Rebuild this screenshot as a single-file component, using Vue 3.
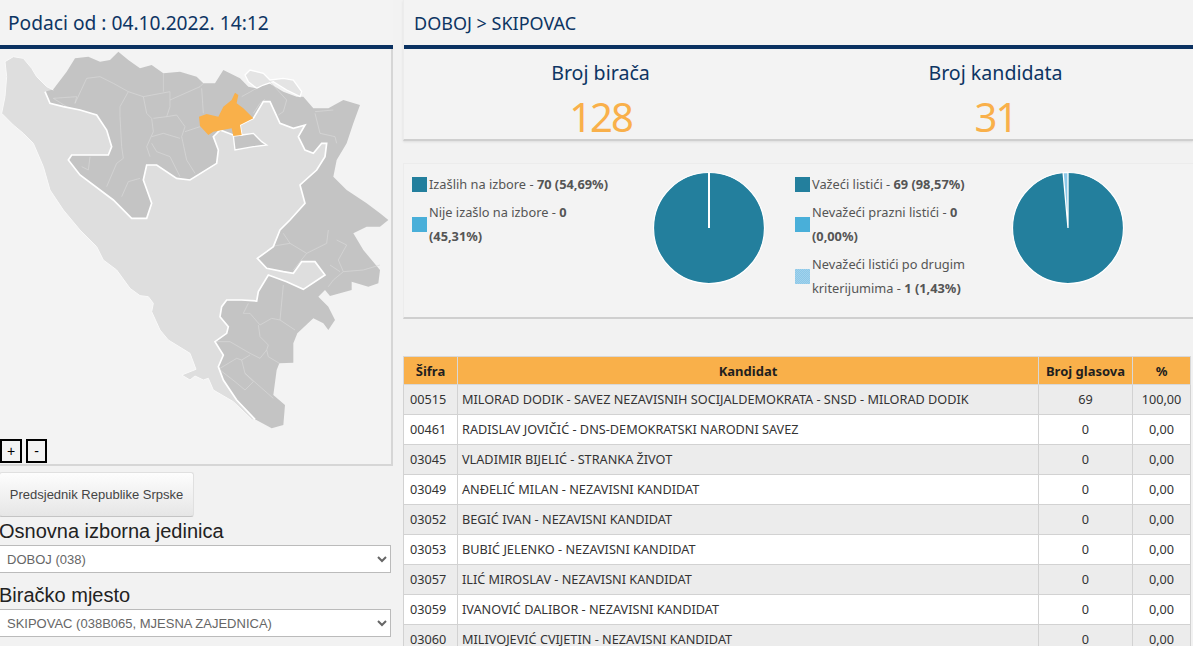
<script setup>
// map outlines, traced at 3x page coordinates
const inner = [[135,275],[150,310],[190,320],[240,330],[290,345],[320,390],[335,440],[325,465],[215,465],[205,480],[240,525],[340,600],[395,655],[440,655],[455,610],[430,540],[440,495],[470,495],[530,535],[570,540],[650,490],[655,450],[640,410],[660,390],[700,405],[725,405],[720,375],[760,355],[790,305],[810,305],[840,370],[880,385],[915,375],[895,410],[915,450],[940,460],[965,430],[980,430],[975,470],[950,510],[900,555],[915,610],[870,660],[840,690],[820,740],[800,755],[772,775],[800,805],[850,815],[880,820],[905,785],[945,785],[975,825],[910,868],[860,845],[805,825],[775,875],[770,903],[725,900],[680,900],[665,920],[660,950],[685,980],[680,1000],[645,1025],[670,1065],[655,1100],[670,1140],[710,1200],[765,1258]]
const outer = [[815,1285],[850,1275],[855,1215],[820,1185],[830,1110],[838,1090],[880,1088],[880,1030],[892,1000],[940,955],[970,970],[985,990],[1005,960],[985,920],[955,890],[975,870],[990,888],[1055,870],[1055,845],[1105,860],[1135,850],[1140,810],[1090,750],[1060,700],[1100,680],[1140,680],[1165,660],[1140,640],[1100,610],[1040,570],[1000,530],[1010,480],[1040,430],[1060,370],[1080,315],[1030,300],[985,325],[940,325],[910,290],[890,290],[850,275],[800,245],[770,265],[745,260],[720,235],[670,210],[645,250],[610,250],[590,230],[540,215],[490,220],[455,195],[420,205],[385,180],[355,155],[330,180],[300,185],[265,170],[225,175],[200,215],[160,268]]
const left = [[160,270],[140,260],[110,230],[95,205],[70,175],[40,170],[15,185],[20,230],[15,290],[5,340],[40,375],[70,400],[100,430],[130,500],[150,570],[190,630],[240,690],[290,740],[310,780],[350,810],[390,865],[420,887],[445,890],[460,910],[455,935],[480,990],[505,1020],[570,1060],[588,1108],[545,1125],[570,1140],[585,1128],[610,1140],[625,1135],[640,1170],[700,1205],[755,1258]]
const blob = [[700,408],[725,405],[760,400],[785,425],[800,435],[760,440],[705,450]]
const brcko = [[735,225],[750,210],[790,220],[810,240],[850,235],[880,240],[905,275],[900,290],[860,270],[820,245],[790,255],[770,265],[745,245]]
const doboj = [[705,278],[715,285],[710,310],[730,325],[760,355],[720,375],[725,405],[700,408],[695,385],[640,395],[625,405],[600,378],[597,350],[620,342],[655,350],[670,320],[695,300]]
const districts = [
  [[225,310],[260,235],[300,230],[340,250],[385,275]],
  [[385,275],[360,320],[360,350],[365,440],[370,475],[350,490],[320,560]],
  [[385,275],[430,290],[440,340],[455,355],[460,395],[440,440],[450,470]],
  [[430,290],[510,275],[510,320],[500,350],[460,355]],
  [[500,350],[530,345],[555,380],[545,410],[560,480],[585,520]],
  [[455,410],[490,400],[540,415]],
  [[455,430],[470,455],[510,470],[540,530]],
  [[490,275],[490,220]],
  [[510,300],[600,260],[610,250]],
  [[605,265],[610,340]],
  [[555,395],[600,380]],
  [[725,290],[770,265]],
  [[760,340],[780,310],[795,298]],
  [[810,245],[860,300],[850,335],[835,345]],
  [[945,340],[960,400],[1005,410],[1010,430]],
  [[945,335],[1000,330]],
  [[270,470],[265,510],[245,500]],
  [[420,535],[385,545],[365,590]],
  [[200,320],[160,295],[230,290],[225,310]],
  [[850,855],[840,960],[885,990]],
  [[840,960],[815,955],[780,975],[750,940],[730,940],[745,910]],
  [[775,975],[780,1010],[805,1035],[800,1050],[780,1075],[750,1060],[690,1025],[650,1025]],
  [[800,1050],[805,1070],[838,1090]],
  [[750,1065],[725,1080],[710,1075],[660,1105]],
  [[725,1080],[735,1120],[780,1160],[820,1195]],
  [[735,1120],[760,1145],[735,1170],[705,1145],[660,1110]],
  [[810,740],[870,730],[920,760],[880,810]],
  [[920,760],[980,730],[985,690]],
  [[1010,720],[1040,735],[1015,780],[1030,815],[1000,840],[985,860]],
  [[1030,815],[1090,810],[1140,795]],
  [[990,795],[1020,815]],
  [[870,730],[850,700]],
]
const pts = (list) => list.map((p) => p.join(',')).join(' ')
const federation = pts([...left, ...[...inner].reverse()])
const entity = pts([...inner, ...outer])
const border = pts(inner)

const stats = [
  { label: 'Broj birača', value: 128 },
  { label: 'Broj kandidata', value: 31 },
]

const rows = [
  ['00515', 'MILORAD DODIK - SAVEZ NEZAVISNIH SOCIJALDEMOKRATA - SNSD - MILORAD DODIK', '69', '100,00'],
  ['00461', 'RADISLAV JOVIČIĆ - DNS-DEMOKRATSKI NARODNI SAVEZ', '0', '0,00'],
  ['03045', 'VLADIMIR BIJELIĆ - STRANKA ŽIVOT', '0', '0,00'],
  ['03049', 'ANĐELIĆ MILAN - NEZAVISNI KANDIDAT', '0', '0,00'],
  ['03052', 'BEGIĆ IVAN - NEZAVISNI KANDIDAT', '0', '0,00'],
  ['03053', 'BUBIĆ JELENKO - NEZAVISNI KANDIDAT', '0', '0,00'],
  ['03057', 'ILIĆ MIROSLAV - NEZAVISNI KANDIDAT', '0', '0,00'],
  ['03059', 'IVANOVIĆ DALIBOR - NEZAVISNI KANDIDAT', '0', '0,00'],
  ['03060', 'MILIVOJEVIĆ CVIJETIN - NEZAVISNI KANDIDAT', '0', '0,00'],
]
</script>

<template>
  <div class="page">
    <aside class="side">
      <div class="head">Podaci od : 04.10.2022. 14:12</div>
      <div class="map">
        <svg class="map-svg" viewBox="0 147 1173 1245" width="391" height="415">
          <polygon :points="federation" fill="#dedede" />
          <polygon :points="entity" fill="#c4c4c4" />
          <polygon :points="pts(blob)" fill="#c4c4c4" stroke="#fff" stroke-width="4" />
          <polygon :points="pts(brcko)" fill="#e4e4e4" stroke="#fff" stroke-width="4" />
          <polyline v-for="(d, i) in districts" :key="i" :points="pts(d)" fill="none" stroke="#d9d9d9" stroke-width="2" />
          <polyline :points="border" fill="none" stroke="#fff" stroke-width="5" />
          <polyline :points="pts(left)" fill="none" stroke="#f9f9f9" stroke-width="3" />
          <polygon :points="pts(doboj)" fill="#f9b04a" />
        </svg>
        <div class="zoom">
          <button class="zoom-btn plus">+</button>
          <button class="zoom-btn minus">-</button>
        </div>
      </div>
      <button class="election">Predsjednik Republike Srpske</button>
      <label class="field-label first">Osnovna izborna jedinica</label>
      <select class="picker">
        <option>DOBOJ (038)</option>
      </select>
      <label class="field-label">Biračko mjesto</label>
      <select class="picker">
        <option>SKIPOVAC (038B065, MJESNA ZAJEDNICA)</option>
      </select>
    </aside>

    <main class="content">
      <div class="panel top">
        <div class="head crumb">DOBOJ &gt; SKIPOVAC</div>
        <div class="stats">
          <div v-for="s in stats" :key="s.label" class="stat">
            <div class="stat-label">{{ s.label }}</div>
            <div class="stat-value">{{ s.value }}</div>
          </div>
        </div>
      </div>

      <div class="panel charts">
        <div class="chart">
          <div class="legend">
            <div class="legend-row">
              <span class="swatch dark"></span>
              <span>Izašlih na izbore - <b>70 (54,69%)</b></span>
            </div>
            <div class="legend-row">
              <span class="swatch mid"></span>
              <span>Nije izašlo na izbore - <b>0</b><br><b>(45,31%)</b></span>
            </div>
          </div>
          <svg class="pie" width="114" height="114" viewBox="-57 -57 114 114">
            <circle r="55.5" fill="#237f9d" stroke="#fff" stroke-width="1.2" />
            <line x1="0" y1="0" x2="0" y2="-56" stroke="#fff" stroke-width="2" />
          </svg>
        </div>
        <div class="chart second">
          <div class="legend">
            <div class="legend-row">
              <span class="swatch dark"></span>
              <span>Važeći listići - <b>69 (98,57%)</b></span>
            </div>
            <div class="legend-row">
              <span class="swatch mid"></span>
              <span>Nevažeći prazni listići - <b>0</b><br><b>(0,00%)</b></span>
            </div>
            <div class="legend-row">
              <span class="swatch pale"></span>
              <span>Nevažeći listići po drugim<br>kriterijumima - <b>1 (1,43%)</b></span>
            </div>
          </div>
          <svg class="pie" width="114" height="114" viewBox="-57 -57 114 114">
            <circle r="55.5" fill="#237f9d" stroke="#fff" stroke-width="1.2" />
            <path d="M0 0 L-4.9 -55.3 A55.5 55.5 0 0 1 0 -55.5 Z" fill="#8cc8e8" stroke="#fff" stroke-width="1.3" />
          </svg>
        </div>
      </div>

      <table class="results">
        <thead>
          <tr>
            <th class="c-code">Šifra</th>
            <th>Kandidat</th>
            <th class="c-votes">Broj glasova</th>
            <th class="c-pct">%</th>
          </tr>
        </thead>
        <tbody>
          <tr v-for="r in rows" :key="r[0]">
            <td>{{ r[0] }}</td>
            <td>{{ r[1] }}</td>
            <td class="num">{{ r[2] }}</td>
            <td class="num">{{ r[3] }}</td>
          </tr>
        </tbody>
      </table>
    </main>
  </div>
</template>

<style scoped>
.page {
  display: flex;
  height: 646px;
  overflow: hidden;
  background: #f2f2f2;
  font-family: "Noto Sans", "DejaVu Sans", sans-serif;
}
.side {
  width: 393px;
  flex: none;
}
.head {
  box-sizing: border-box;
  height: 49px;
  padding: 11px 0 0 8px;
  font-size: 19.2px;
  line-height: 24px;
  color: #0d3563;
  border-bottom: 4px solid #0a3161;
  background: #f3f3f3;
}
.crumb {
  font-size: 18px;
  padding-left: 10px;
}
.map {
  position: relative;
  height: 417px;
  box-sizing: border-box;
  background: #f3f3f3;
  border-right: 2px solid #d6d6d6;
  border-bottom: 2px solid #d6d6d6;
}
.map-svg {
  display: block;
}
.zoom {
  position: absolute;
  left: 0;
  bottom: 1px;
  display: flex;
  gap: 4px;
}
.zoom-btn {
  height: 24px;
  padding: 0;
  box-sizing: border-box;
  border: 2px solid #000;
  background: #f3f3f3;
  color: #000;
  font-family: "Liberation Sans", sans-serif;
  font-size: 14px;
  line-height: 18px;
}
.plus { width: 22px; }
.minus { width: 21px; }
.election {
  display: block;
  box-sizing: border-box;
  width: 195px;
  height: 45px;
  margin: 6px 0 0 -1px;
  padding: 0;
  border: 1px solid #e0e0e0;
  border-bottom-color: #c4c4c4;
  border-radius: 3px;
  background: linear-gradient(#fdfdfd, #e6e6e6);
  color: #444;
  font-family: "Liberation Sans", sans-serif;
  font-size: 13px;
}
.field-label {
  display: block;
  margin: 10px 0 0 -1px;
  font-family: "Liberation Sans", sans-serif;
  font-size: 20px;
  line-height: 25px;
  color: #222;
}
.field-label.first {
  margin-top: 2px;
}
.picker {
  display: block;
  width: 392px;
  height: 28px;
  margin: 1px 0 0 -1px;
  padding: 0 0 0 3px;
  border: 1px solid #bbb;
  border-radius: 0;
  background: #fff;
  color: #666;
  font-family: "Liberation Sans", sans-serif;
  font-size: 13px;
}
.content {
  flex: 1;
  min-width: 0;
  margin-left: 10px;
}
.panel {
  background: #f3f3f3;
  border-left: 1px solid #ececec;
  border-bottom: 2px solid #cfcfcf;
}
.top {
  height: 141px;
  box-sizing: border-box;
  box-shadow: 0 1px 2px #ddd;
}
.stats {
  display: flex;
  margin-left: -1px;
}
.stat {
  flex: 1;
  text-align: center;
}
.stat-label {
  margin-top: 9px;
  font-size: 19.6px;
  line-height: 30px;
  color: #0d3563;
}
.stat-value {
  margin-top: 6px;
  font-size: 40px;
  letter-spacing: -2px;
  line-height: 46px;
  color: #f9b04a;
}
.charts {
  display: flex;
  height: 156px;
  box-sizing: border-box;
  margin-top: 22px;
  border-top: 1px solid #ececec;
  padding-top: 8px;
}
.chart {
  box-sizing: border-box;
  width: 383px;
  flex: none;
  padding-left: 8px;
  display: flex;
}
.legend {
  width: 240px;
  flex: none;
  font-size: 12.8px;
  line-height: 24.5px;
  color: #555;
}
.pie {
  flex: none;
  margin-top: -1px;
}
.second .legend {
  width: 216px;
}
.legend-row {
  display: flex;
  align-items: center;
  gap: 2px;
  margin-bottom: 3px;
  white-space: nowrap;
}
.swatch {
  width: 15px;
  height: 15px;
  flex: none;
}
.dark { background: #237f9d; }
.mid { background: #49afd9; }
.pale { background: repeating-conic-gradient(#8cc8e8 0 25%, #a2d2ec 0 50%) 0 0 / 2px 2px; }
.results {
  width: 788px;
  margin-top: 37px;
  border-collapse: collapse;
  table-layout: fixed;
  font-size: 12.7px;
  color: #333;
}
.results th {
  height: 26px;
  padding: 1px 0 0;
  background: #f9b04a;
  border: 1px solid #d8d8d8;
  color: #1f1f1f;
  font-size: 13px;
  font-weight: 700;
  text-align: center;
}
.results td {
  height: 27px;
  padding: 0 5px 2px;
  border: 1px solid #d2d2d2;
  white-space: nowrap;
}
.results td:first-child {
  padding-left: 6px;
}
.results td:nth-child(2) {
  padding-left: 4px;
}
.results tbody tr:nth-child(odd) td {
  background: #ececec;
}
.results tbody tr:nth-child(even) td {
  background: #fff;
}
.results .num {
  text-align: center;
}
.c-code { width: 53px; }
.c-votes { width: 93px; }
.c-pct { width: 57px; }
</style>

<style>
html, body {
  overflow: hidden;
  background: #f2f2f2;
}
</style>
